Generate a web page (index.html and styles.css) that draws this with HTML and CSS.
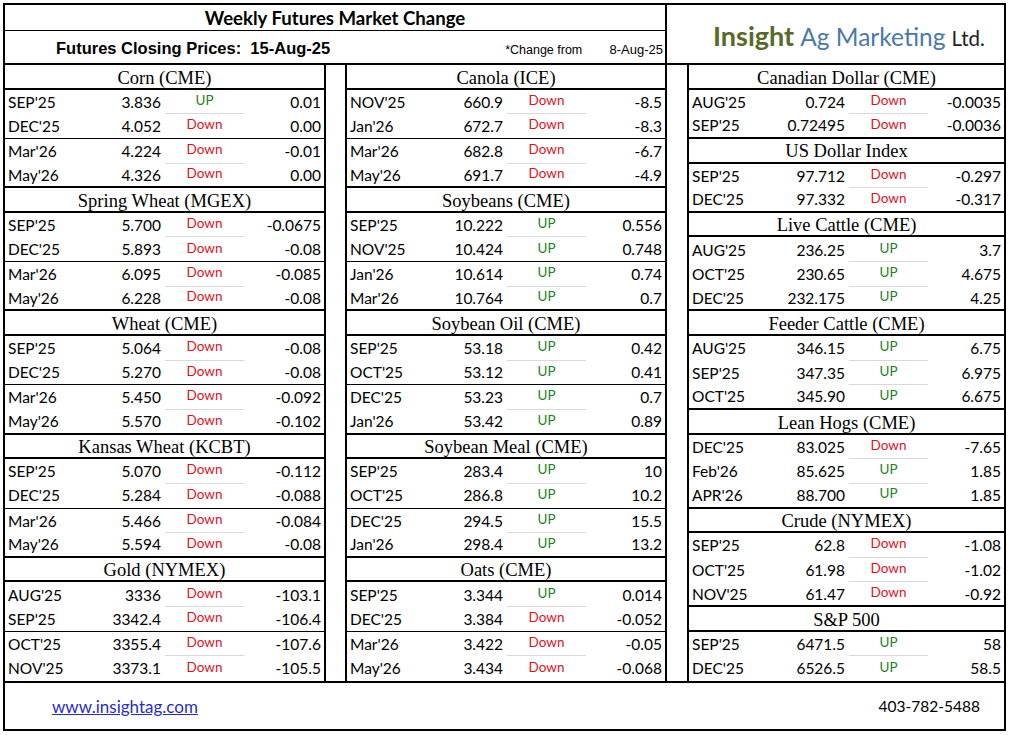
FILE: index.html
```html
<!DOCTYPE html>
<html lang="en">
<head>
<meta charset="utf-8">
<title>Weekly Futures Market Change</title>
<link rel="stylesheet" href="styles.css">
</head>
<body>
<div class="sheet">
  <header class="top">
    <div class="top-left">
      <div class="title">Weekly Futures Market Change</div>
      <div class="subtitle">
        <span class="closing">Futures Closing Prices:&nbsp;&nbsp;15-Aug-25</span>
        <span class="from">*Change from</span>
        <span class="fromdate">8-Aug-25</span>
      </div>
    </div>
    <div class="logo"><span class="ins">Insight</span> <span class="ag">Ag Marketing</span> <span class="ltd">Ltd.</span></div>
  </header>

  <main class="data">
    <section class="col col1">
      <div class="hd">Corn (CME)</div>
      <div class="row sep"><span class="m">SEP'25</span><span class="p">3.836</span><span class="s up">UP</span><span class="c">0.01</span></div>
      <div class="row mid"><span class="m">DEC'25</span><span class="p">4.052</span><span class="s dn">Down</span><span class="c">0.00</span></div>
      <div class="row sep"><span class="m">Mar'26</span><span class="p">4.224</span><span class="s dn">Down</span><span class="c">-0.01</span></div>
      <div class="row end"><span class="m">May'26</span><span class="p">4.326</span><span class="s dn">Down</span><span class="c">0.00</span></div>
      <div class="hd">Spring Wheat (MGEX)</div>
      <div class="row sep"><span class="m">SEP'25</span><span class="p">5.700</span><span class="s dn">Down</span><span class="c">-0.0675</span></div>
      <div class="row mid"><span class="m">DEC'25</span><span class="p">5.893</span><span class="s dn">Down</span><span class="c">-0.08</span></div>
      <div class="row sep"><span class="m">Mar'26</span><span class="p">6.095</span><span class="s dn">Down</span><span class="c">-0.085</span></div>
      <div class="row end"><span class="m">May'26</span><span class="p">6.228</span><span class="s dn">Down</span><span class="c">-0.08</span></div>
      <div class="hd">Wheat (CME)</div>
      <div class="row sep"><span class="m">SEP'25</span><span class="p">5.064</span><span class="s dn">Down</span><span class="c">-0.08</span></div>
      <div class="row mid"><span class="m">DEC'25</span><span class="p">5.270</span><span class="s dn">Down</span><span class="c">-0.08</span></div>
      <div class="row sep"><span class="m">Mar'26</span><span class="p">5.450</span><span class="s dn">Down</span><span class="c">-0.092</span></div>
      <div class="row end"><span class="m">May'26</span><span class="p">5.570</span><span class="s dn">Down</span><span class="c">-0.102</span></div>
      <div class="hd">Kansas Wheat (KCBT)</div>
      <div class="row sep"><span class="m">SEP'25</span><span class="p">5.070</span><span class="s dn">Down</span><span class="c">-0.112</span></div>
      <div class="row mid"><span class="m">DEC'25</span><span class="p">5.284</span><span class="s dn">Down</span><span class="c">-0.088</span></div>
      <div class="row sep"><span class="m">Mar'26</span><span class="p">5.466</span><span class="s dn">Down</span><span class="c">-0.084</span></div>
      <div class="row end"><span class="m">May'26</span><span class="p">5.594</span><span class="s dn">Down</span><span class="c">-0.08</span></div>
      <div class="hd">Gold (NYMEX)</div>
      <div class="row sep"><span class="m">AUG'25</span><span class="p">3336</span><span class="s dn">Down</span><span class="c">-103.1</span></div>
      <div class="row mid"><span class="m">SEP'25</span><span class="p">3342.4</span><span class="s dn">Down</span><span class="c">-106.4</span></div>
      <div class="row sep"><span class="m">OCT'25</span><span class="p">3355.4</span><span class="s dn">Down</span><span class="c">-107.6</span></div>
      <div class="row"><span class="m">NOV'25</span><span class="p">3373.1</span><span class="s dn">Down</span><span class="c">-105.5</span></div>
    </section>

    <div class="gap"></div>

    <section class="col col2">
      <div class="hd">Canola (ICE)</div>
      <div class="row sep"><span class="m">NOV'25</span><span class="p">660.9</span><span class="s dn">Down</span><span class="c">-8.5</span></div>
      <div class="row mid"><span class="m">Jan'26</span><span class="p">672.7</span><span class="s dn">Down</span><span class="c">-8.3</span></div>
      <div class="row sep"><span class="m">Mar'26</span><span class="p">682.8</span><span class="s dn">Down</span><span class="c">-6.7</span></div>
      <div class="row end"><span class="m">May'26</span><span class="p">691.7</span><span class="s dn">Down</span><span class="c">-4.9</span></div>
      <div class="hd">Soybeans (CME)</div>
      <div class="row sep"><span class="m">SEP'25</span><span class="p">10.222</span><span class="s up">UP</span><span class="c">0.556</span></div>
      <div class="row mid"><span class="m">NOV'25</span><span class="p">10.424</span><span class="s up">UP</span><span class="c">0.748</span></div>
      <div class="row sep"><span class="m">Jan'26</span><span class="p">10.614</span><span class="s up">UP</span><span class="c">0.74</span></div>
      <div class="row end"><span class="m">Mar'26</span><span class="p">10.764</span><span class="s up">UP</span><span class="c">0.7</span></div>
      <div class="hd">Soybean Oil (CME)</div>
      <div class="row sep"><span class="m">SEP'25</span><span class="p">53.18</span><span class="s up">UP</span><span class="c">0.42</span></div>
      <div class="row mid"><span class="m">OCT'25</span><span class="p">53.12</span><span class="s up">UP</span><span class="c">0.41</span></div>
      <div class="row sep"><span class="m">DEC'25</span><span class="p">53.23</span><span class="s up">UP</span><span class="c">0.7</span></div>
      <div class="row end"><span class="m">Jan'26</span><span class="p">53.42</span><span class="s up">UP</span><span class="c">0.89</span></div>
      <div class="hd">Soybean Meal (CME)</div>
      <div class="row sep"><span class="m">SEP'25</span><span class="p">283.4</span><span class="s up">UP</span><span class="c">10</span></div>
      <div class="row mid"><span class="m">OCT'25</span><span class="p">286.8</span><span class="s up">UP</span><span class="c">10.2</span></div>
      <div class="row sep"><span class="m">DEC'25</span><span class="p">294.5</span><span class="s up">UP</span><span class="c">15.5</span></div>
      <div class="row end"><span class="m">Jan'26</span><span class="p">298.4</span><span class="s up">UP</span><span class="c">13.2</span></div>
      <div class="hd">Oats (CME)</div>
      <div class="row sep"><span class="m">SEP'25</span><span class="p">3.344</span><span class="s up">UP</span><span class="c">0.014</span></div>
      <div class="row mid"><span class="m">DEC'25</span><span class="p">3.384</span><span class="s dn">Down</span><span class="c">-0.052</span></div>
      <div class="row sep"><span class="m">Mar'26</span><span class="p">3.422</span><span class="s dn">Down</span><span class="c">-0.05</span></div>
      <div class="row"><span class="m">May'26</span><span class="p">3.434</span><span class="s dn">Down</span><span class="c">-0.068</span></div>
    </section>

    <div class="gap"></div>

    <section class="col col3">
      <div class="hd">Canadian Dollar (CME)</div>
      <div class="row sep"><span class="m">AUG'25</span><span class="p">0.724</span><span class="s dn">Down</span><span class="c">-0.0035</span></div>
      <div class="row end"><span class="m">SEP'25</span><span class="p">0.72495</span><span class="s dn">Down</span><span class="c">-0.0036</span></div>
      <div class="hd">US Dollar Index</div>
      <div class="row sep"><span class="m">SEP'25</span><span class="p">97.712</span><span class="s dn">Down</span><span class="c">-0.297</span></div>
      <div class="row end"><span class="m">DEC'25</span><span class="p">97.332</span><span class="s dn">Down</span><span class="c">-0.317</span></div>
      <div class="hd">Live Cattle (CME)</div>
      <div class="row sep"><span class="m">AUG'25</span><span class="p">236.25</span><span class="s up">UP</span><span class="c">3.7</span></div>
      <div class="row sep"><span class="m">OCT'25</span><span class="p">230.65</span><span class="s up">UP</span><span class="c">4.675</span></div>
      <div class="row end"><span class="m">DEC'25</span><span class="p">232.175</span><span class="s up">UP</span><span class="c">4.25</span></div>
      <div class="hd">Feeder Cattle (CME)</div>
      <div class="row sep"><span class="m">AUG'25</span><span class="p">346.15</span><span class="s up">UP</span><span class="c">6.75</span></div>
      <div class="row sep"><span class="m">SEP'25</span><span class="p">347.35</span><span class="s up">UP</span><span class="c">6.975</span></div>
      <div class="row end"><span class="m">OCT'25</span><span class="p">345.90</span><span class="s up">UP</span><span class="c">6.675</span></div>
      <div class="hd">Lean Hogs (CME)</div>
      <div class="row sep"><span class="m">DEC'25</span><span class="p">83.025</span><span class="s dn">Down</span><span class="c">-7.65</span></div>
      <div class="row sep"><span class="m">Feb'26</span><span class="p">85.625</span><span class="s up">UP</span><span class="c">1.85</span></div>
      <div class="row end"><span class="m">APR'26</span><span class="p">88.700</span><span class="s up">UP</span><span class="c">1.85</span></div>
      <div class="hd">Crude (NYMEX)</div>
      <div class="row sep"><span class="m">SEP'25</span><span class="p">62.8</span><span class="s dn">Down</span><span class="c">-1.08</span></div>
      <div class="row sep"><span class="m">OCT'25</span><span class="p">61.98</span><span class="s dn">Down</span><span class="c">-1.02</span></div>
      <div class="row end"><span class="m">NOV'25</span><span class="p">61.47</span><span class="s dn">Down</span><span class="c">-0.92</span></div>
      <div class="hd">S&amp;P 500</div>
      <div class="row sep"><span class="m">SEP'25</span><span class="p">6471.5</span><span class="s up">UP</span><span class="c">58</span></div>
      <div class="row"><span class="m">DEC'25</span><span class="p">6526.5</span><span class="s up">UP</span><span class="c">58.5</span></div>
    </section>
  </main>

  <footer class="foot">
    <a class="site" href="#">www.insightag.com</a>
    <span class="phone">403-782-5488</span>
  </footer>
</div>
</body>
</html>
```

FILE: styles.css
```css
* { box-sizing: border-box; }

body {
  margin: 0;
  background: #fff;
}

.sheet {
  margin: 3px 0 0 3px;
  width: 1003px;
  height: 728px;
  border: 2px solid #000;
  display: flex;
  flex-direction: column;
  font-family: Lato, "Liberation Sans", sans-serif;
  color: #000;
}

/* ---------- header ---------- */
.top {
  display: flex;
  flex: none;
  height: 60px;
  border-bottom: 2px solid #000;
}

.top-left {
  width: 662px;
  border-right: 2px solid #000;
  display: flex;
  flex-direction: column;
}

.title {
  height: 26px;
  border-bottom: 1px solid #000;
  display: flex;
  align-items: center;
  justify-content: center;
  font-weight: 700;
  font-size: 18.6px;
  line-height: 1;
  padding-top: 1px;
}

.subtitle {
  flex: 1;
  display: flex;
  align-items: baseline;
  padding: 8px 0 0 51px;
  font-family: "Liberation Sans", Arial, sans-serif;
}

.closing {
  font-weight: 700;
  font-size: 16.5px;
  white-space: pre;
}

.from {
  font-size: 12.5px;
  margin-left: 175px;
}

.fromdate {
  font-size: 13px;
  margin-left: auto;
  padding-right: 2px;
}

.logo {
  flex: 1;
  padding: 16px 0 0 46px;
  line-height: 30px;
  white-space: nowrap;
}

.logo .ins {
  font-weight: 700;
  font-size: 27px;
  color: #586a28;
}

.logo .ag {
  margin-left: 2px;
  font-size: 24.5px;
  color: #4a78ad;
}

.logo .ltd {
  margin-left: 2px;
  font-size: 20.5px;
  color: #222;
}

/* ---------- data grid ---------- */
.data {
  flex: none;
  height: 618px;
  border-bottom: 2px solid #000;
  display: grid;
  grid-template-columns: 321px 19px 322px 20px 317px;
  overflow: hidden;
}

.col {
  display: grid;
  grid-template-rows: repeat(25, minmax(0, 1fr));
  min-height: 0;
}

.col1 { border-right: 2px solid #000; }
.col2 { border-left: 2px solid #000; border-right: 2px solid #000; }
.col3 { border-left: 2px solid #000; }

.hd {
  display: flex;
  align-items: center;
  justify-content: center;
  font-family: "Liberation Serif", "Times New Roman", serif;
  font-size: 18.5px;
  line-height: 1;
  border-bottom: 2px solid #000;
  padding-top: 3px;
}

.row {
  display: grid;
  grid-template-columns: 82px 78px 79px 1fr;
  align-items: stretch;
  font-size: 15.5px;
  line-height: 1;
}

.row.mid { border-bottom: 1px solid #000; }
.row.end { border-bottom: 2px solid #000; }

.m, .p, .c {
  display: flex;
  align-items: center;
  padding-top: 1px;
}

.m { padding-left: 3px; }
.p { justify-content: flex-end; padding-right: 4px; }
.c { justify-content: flex-end; padding-right: 3px; }

.s {
  display: flex;
  align-items: center;
  justify-content: center;
  font-size: 13.5px;
  padding-bottom: 2px;
}

.row.sep .s { border-bottom: 1px solid #d9d9d9; }

.up { color: #1d821d; }
.dn { color: #e3101c; }

/* ---------- footer ---------- */
.foot {
  flex: 1;
  display: flex;
  align-items: center;
  font-size: 15.5px;
}

.site {
  margin-left: 47px;
  color: #2a2ad0;
  text-decoration: underline;
  font-size: 17px;
}

.phone {
  margin-left: auto;
  margin-right: 24px;
}
```
